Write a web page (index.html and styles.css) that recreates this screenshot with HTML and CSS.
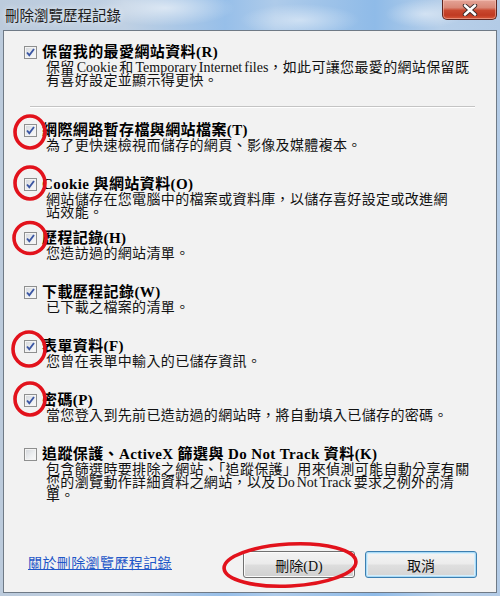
FILE: index.html
```html
<!DOCTYPE html>
<html lang="zh-Hant">
<head>
<meta charset="utf-8">
<title>刪除瀏覽歷程記錄</title>
<link rel="stylesheet" href="styles.css">
</head>
<body>
<div class="window">
  <div class="titlebar">
    <span class="title">刪除瀏覽歷程記錄</span>
    <div class="close">
      <svg width="16" height="12" viewBox="0 0 16 12">
        <path d="M3 1.5 L13 10.5 M13 1.5 L3 10.5" stroke="#3a2a2a" stroke-width="4.4" stroke-linecap="round" fill="none"/>
        <path d="M3 1.5 L13 10.5 M13 1.5 L3 10.5" stroke="#ffffff" stroke-width="2.6" stroke-linecap="round" fill="none"/>
      </svg>
    </div>
  </div>
  <div class="panel">
    <div class="item first">
      <span class="cb checked"><svg width="11" height="11" viewBox="0 0 11 11"><path d="M2 5.5 L4.3 8.2 L9 2" stroke="#3b56a3" stroke-width="1.9" fill="none"/></svg></span>
      <span class="label">保留我的最愛網站資料(R)</span>
      <span class="desc">保留<span class="en"> Cookie </span>和<span class="en"> Temporary Internet files</span>，如此可讓您最愛的網站保留既<br>有喜好設定並顯示得更快。</span>
    </div>
    <div class="sep"></div>
    <div class="item">
      <span class="cb checked"><svg width="11" height="11" viewBox="0 0 11 11"><path d="M2 5.5 L4.3 8.2 L9 2" stroke="#3b56a3" stroke-width="1.9" fill="none"/></svg></span>
      <span class="label">網際網路暫存檔與網站檔案(T)</span>
      <span class="desc">為了更快速檢視而儲存的網頁、影像及媒體複本。</span>
    </div>
    <div class="item">
      <span class="cb checked"><svg width="11" height="11" viewBox="0 0 11 11"><path d="M2 5.5 L4.3 8.2 L9 2" stroke="#3b56a3" stroke-width="1.9" fill="none"/></svg></span>
      <span class="label">Cookie 與網站資料(O)</span>
      <span class="desc">網站儲存在您電腦中的檔案或資料庫，以儲存喜好設定或改進網<br>站效能。</span>
    </div>
    <div class="item">
      <span class="cb checked"><svg width="11" height="11" viewBox="0 0 11 11"><path d="M2 5.5 L4.3 8.2 L9 2" stroke="#3b56a3" stroke-width="1.9" fill="none"/></svg></span>
      <span class="label">歷程記錄(H)</span>
      <span class="desc">您造訪過的網站清單。</span>
    </div>
    <div class="item">
      <span class="cb checked"><svg width="11" height="11" viewBox="0 0 11 11"><path d="M2 5.5 L4.3 8.2 L9 2" stroke="#3b56a3" stroke-width="1.9" fill="none"/></svg></span>
      <span class="label">下載歷程記錄(W)</span>
      <span class="desc">已下載之檔案的清單。</span>
    </div>
    <div class="item">
      <span class="cb checked"><svg width="11" height="11" viewBox="0 0 11 11"><path d="M2 5.5 L4.3 8.2 L9 2" stroke="#3b56a3" stroke-width="1.9" fill="none"/></svg></span>
      <span class="label">表單資料(F)</span>
      <span class="desc">您曾在表單中輸入的已儲存資訊。</span>
    </div>
    <div class="item">
      <span class="cb checked"><svg width="11" height="11" viewBox="0 0 11 11"><path d="M2 5.5 L4.3 8.2 L9 2" stroke="#3b56a3" stroke-width="1.9" fill="none"/></svg></span>
      <span class="label">密碼(P)</span>
      <span class="desc">當您登入到先前已造訪過的網站時，將自動填入已儲存的密碼。</span>
    </div>
    <div class="item">
      <span class="cb"></span>
      <span class="label">追蹤保護、ActiveX 篩選與 Do Not Track 資料(K)</span>
      <span class="desc">包含篩選時要排除之網站、「追蹤保護」用來偵測可能自動分享有關<br>您的瀏覽動作詳細資料之網站，以及<span class="en"> Do Not Track </span>要求之例外的清<br>單。</span>
    </div>
    <div class="footer">
      <a class="link" href="#">關於刪除瀏覽歷程記錄</a>
      <div class="buttons">
        <button class="btn">刪除(D)</button>
        <button class="btn default">取消</button>
      </div>
    </div>
  </div>
  <svg class="marks" width="500" height="596" viewBox="0 0 500 596">
    <g fill="none" stroke="#e2121c" stroke-width="3.6">
      <ellipse cx="30" cy="132" rx="15" ry="16"/>
      <ellipse cx="30" cy="183" rx="15" ry="16"/>
      <ellipse cx="30" cy="238" rx="16" ry="15.5"/>
      <ellipse cx="29" cy="349" rx="16" ry="17"/>
      <ellipse cx="30" cy="399" rx="15" ry="16"/>
      <ellipse cx="290" cy="565" rx="66" ry="21" transform="rotate(-3 290 565)"/>
    </g>
  </svg>
</div>
</body>
</html>
```
FILE: styles.css
```css
html, body {
  margin: 0;
  padding: 0;
}
body {
  width: 500px;
  height: 596px;
  overflow: hidden;
  font-family: "Liberation Serif", "Noto Sans CJK TC", serif;
  color: #111;
}
.window {
  position: relative;
  width: 500px;
  height: 596px;
  display: flex;
  flex-direction: column;
  box-sizing: border-box;
  background:
    radial-gradient(ellipse 70px 18px at 165px 8px, rgba(255,255,255,0.55), rgba(255,255,255,0)),
    radial-gradient(ellipse 60px 16px at 300px 20px, rgba(255,255,255,0.45), rgba(255,255,255,0)),
    radial-gradient(ellipse 40px 14px at 425px 14px, rgba(255,255,255,0.45), rgba(255,255,255,0)),
    linear-gradient(to right, #bccbdc 0%, #bfd0e3 25%, #97bfe9 45%, #aecbea 55%, #8fbbe8 75%, #b7cfe9 88%, #b3cbe6 100%);
}
.titlebar {
  height: 30px;
  display: flex;
  justify-content: space-between;
  align-items: flex-start;
  padding: 0 3px 0 5px;
  flex: none;
}
.title {
  font-family: "Noto Sans CJK TC", sans-serif;
  font-size: 14.5px;
  line-height: 29px;
  color: #1c1c1c;
  text-shadow: 0 0 6px rgba(255,255,255,0.8);
}
.close {
  width: 55px;
  height: 20px;
  box-sizing: border-box;
  border: 1px solid #5e2620;
  border-top: none;
  border-radius: 0 0 5px 5px;
  background: linear-gradient(to bottom, #e4a497 0%, #d98877 40%, #c9482f 55%, #c03a22 80%, #d7583a 100%);
  box-shadow: inset 0 0 0 1px rgba(255,210,200,0.45);
  display: flex;
  align-items: center;
  justify-content: center;
}
.panel {
  flex: 1;
  margin: 0 3px 3px 3px;
  border: 1px solid #6f7a86;
  background: #f2f2f2;
  display: flex;
  flex-direction: column;
  padding-top: 13px;
}
.item {
  display: grid;
  grid-template-columns: 13px auto;
  grid-template-rows: 16px auto;
  column-gap: 5px;
  align-content: start;
  padding-left: 20px;
  height: 54px;
  flex: none;
}
.item.first {
  height: 62px;
}
.cb {
  grid-column: 1;
  grid-row: 1;
  align-self: center;
  width: 13px;
  height: 13px;
  box-sizing: border-box;
  border: 1px solid #8e8f8f;
  background: linear-gradient(135deg, #d2d5da 0%, #eceef0 55%, #fafafa 100%);
  box-shadow: inset 0 0 0 1px #f4f4f4;
  display: flex;
  align-items: center;
  justify-content: center;
}
.cb svg {
  display: block;
}
.label {
  grid-column: 2;
  grid-row: 1;
  font-size: 15px;
  font-weight: 700;
  letter-spacing: 0.4px;
  line-height: 16px;
  white-space: nowrap;
  color: #000;
}
.desc {
  grid-column: 2;
  grid-row: 2;
  padding-left: 4px;
  padding-top: 1px;
  font-size: 14px;
  letter-spacing: 0.35px;
  line-height: 13px;
  white-space: nowrap;
  color: #111;
}
.en {
  letter-spacing: 0;
  word-spacing: -1.5px;
}
.sep {
  height: 1px;
  margin: 0 21px 14px 26px;
  border-top: 1px solid #c4c4c4;
  background: #ffffff;
  flex: none;
}
.footer {
  margin-top: auto;
  display: flex;
  justify-content: space-between;
  align-items: center;
  padding: 0 19px 14px 24px;
}
.link {
  font-family: "Noto Sans CJK TC", sans-serif;
  font-size: 14px;
  letter-spacing: 0.4px;
  line-height: 16px;
  color: #1f57c8;
  text-decoration: underline;
  margin-bottom: 6px;
}
.buttons {
  display: flex;
  gap: 10px;
}
.btn {
  width: 112px;
  height: 27px;
  box-sizing: border-box;
  border: 1px solid #707070;
  border-radius: 3px;
  background: linear-gradient(to bottom, #f3f3f3 0%, #ebebeb 48%, #dddddd 52%, #d0d0d0 100%);
  box-shadow: inset 0 0 0 1px #fbfbfb;
  font-family: "Liberation Serif", "Noto Sans CJK TC", serif;
  font-size: 14px;
  color: #111;
  padding: 0;
}
.btn.default {
  border-color: #3c7fb1;
  box-shadow: inset 0 0 0 1px #a9daf6, inset 0 0 0 2px #d6eefb;
  background: linear-gradient(to bottom, #f4f4f4 0%, #ececec 48%, #dfdfdf 52%, #d4d4d4 100%);
}
.marks {
  position: absolute;
  left: 0;
  top: 0;
  pointer-events: none;
}
```
